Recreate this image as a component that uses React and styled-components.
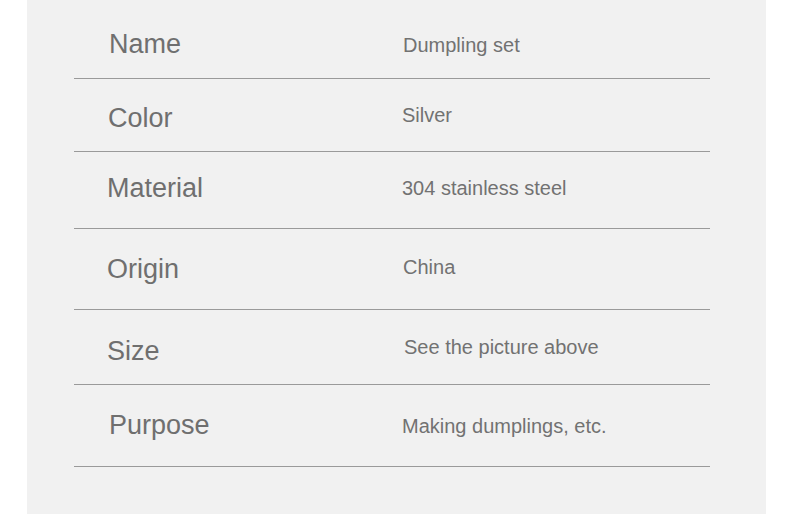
import React from "react";
import styled, { createGlobalStyle } from "styled-components";

const GlobalStyle = createGlobalStyle`
  html, body {
    margin: 0;
    padding: 0;
    background: #ffffff;
  }
  body {
    font-family: "Liberation Sans", Arial, sans-serif;
  }
`;

const Panel = styled.div`
  margin-left: 27px;
  width: 739px;
  height: 514px;
  background: #f1f1f1;
  padding-left: 47px;
  box-sizing: border-box;
`;

const Table = styled.div`
  width: 636px;
  display: flex;
  flex-direction: column;
`;

const Row = styled.div`
  display: grid;
  grid-template-columns: 328px 1fr;
  align-items: center;
  height: ${(p) => p.$h}px;
  box-sizing: border-box;
  border-bottom: 1px solid #9a9a9a;
`;

const Label = styled.div`
  padding-left: ${(p) => p.$x}px;
  margin-top: ${(p) => p.$dy * 2}px;
  font-size: 27px;
  color: #6f6f6f;
`;

const Value = styled.div`
  padding-left: ${(p) => p.$x}px;
  margin-top: ${(p) => p.$dy * 2}px;
  font-size: 20px;
  color: #727272;
`;

const rows = [
  { label: "Name", value: "Dumpling set", h: 79, lx: 35, ly: 5, vx: 1, vy: 6 },
  { label: "Color", value: "Silver", h: 73, lx: 34, ly: 3, vx: -1, vy: 0 },
  { label: "Material", value: "304 stainless steel", h: 77, lx: 33, ly: -2, vx: 0, vy: -2 },
  { label: "Origin", value: "China", h: 81, lx: 33, ly: 0, vx: 1, vy: -2 },
  { label: "Size", value: "See the picture above", h: 75, lx: 33, ly: 4, vx: 2, vy: 0 },
  { label: "Purpose", value: "Making dumplings, etc.", h: 82, lx: 35, ly: 0, vx: 0, vy: 1 },
];

export default function App() {
  return (
    <>
      <GlobalStyle />
      <Panel>
        <Table>
          {rows.map((r) => (
            <Row key={r.label} $h={r.h}>
              <Label $x={r.lx} $dy={r.ly}>{r.label}</Label>
              <Value $x={r.vx} $dy={r.vy}>{r.value}</Value>
            </Row>
          ))}
        </Table>
      </Panel>
    </>
  );
}
